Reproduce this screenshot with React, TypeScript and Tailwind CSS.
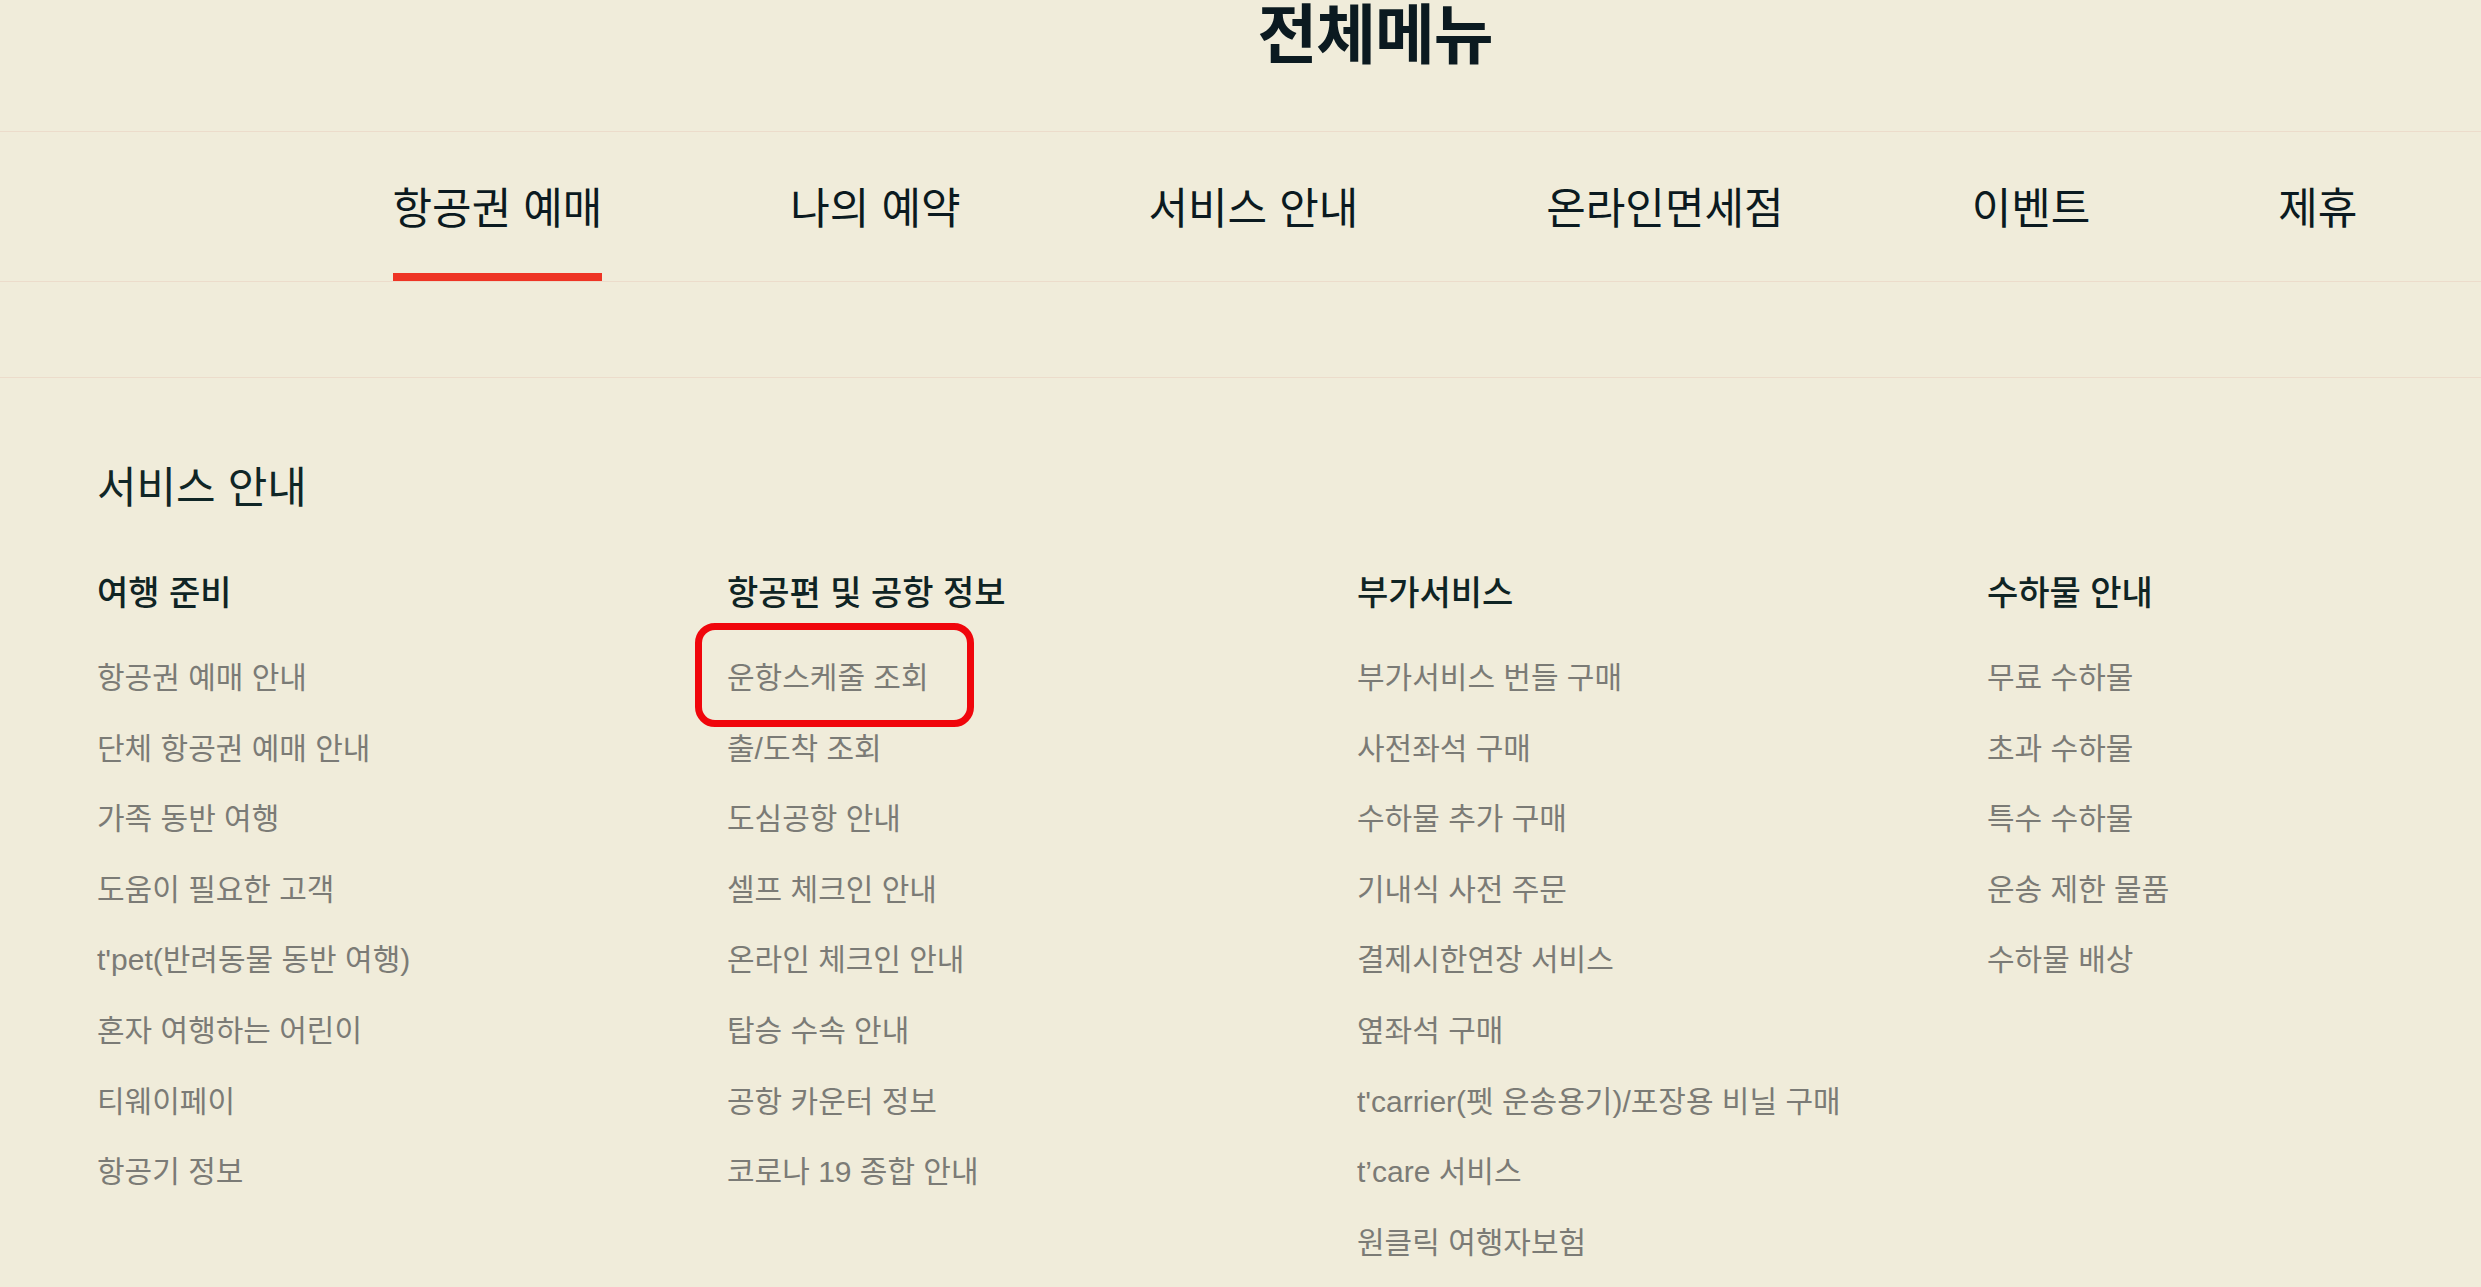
import React from "react";

const tabs = ["항공권 예매", "나의 예약", "서비스 안내", "온라인면세점", "이벤트", "제휴"];

const columns: { title: string; items: string[] }[] = [
  {
    title: "여행 준비",
    items: [
      "항공권 예매 안내",
      "단체 항공권 예매 안내",
      "가족 동반 여행",
      "도움이 필요한 고객",
      "t'pet(반려동물 동반 여행)",
      "혼자 여행하는 어린이",
      "티웨이페이",
      "항공기 정보",
    ],
  },
  {
    title: "항공편 및 공항 정보",
    items: [
      "운항스케줄 조회",
      "출/도착 조회",
      "도심공항 안내",
      "셀프 체크인 안내",
      "온라인 체크인 안내",
      "탑승 수속 안내",
      "공항 카운터 정보",
      "코로나 19 종합 안내",
    ],
  },
  {
    title: "부가서비스",
    items: [
      "부가서비스 번들 구매",
      "사전좌석 구매",
      "수하물 추가 구매",
      "기내식 사전 주문",
      "결제시한연장 서비스",
      "옆좌석 구매",
      "t'carrier(펫 운송용기)/포장용 비닐 구매",
      "t’care 서비스",
      "원클릭 여행자보험",
    ],
  },
  {
    title: "수하물 안내",
    items: ["무료 수하물", "초과 수하물", "특수 수하물", "운송 제한 물품", "수하물 배상"],
  },
];

export default function App() {
  return (
    <div
      className="w-[2481px] min-h-screen overflow-hidden bg-[#f0ecda]"
      style={{ fontFamily: '"Liberation Sans", "Noto Sans CJK KR", sans-serif' }}
    >
      <div className="w-[2750px]">
        {/* title */}
        <div className="h-[132px] border-b border-[#ecdccb] flex justify-center">
          <h1 className="text-[65px] leading-[72px] font-bold text-[#0b1a20] tracking-[-1px]">전체메뉴</h1>
        </div>
        {/* tabs */}
        <nav className="h-[150px] border-b border-[#ecdccb] flex justify-center gap-[188px]">
          {tabs.map((t, i) => (
            <div
              key={t}
              className={
                "h-full pt-[56px] border-b-[8px] text-[43px] leading-[43px] text-[#0b1a20] " +
                (i === 0 ? "border-[#ee3424]" : "border-transparent")
              }
            >
              {t}
            </div>
          ))}
        </nav>
      </div>
      <div className="h-[96px] border-b border-[#ecdccb]" />
      {/* content */}
      <div className="pl-[97px] pt-[88px]">
        <h2 className="text-[43px] leading-[44px] text-[#102626]">서비스 안내</h2>
        <div className="mt-[66px] flex">
          {columns.map((c, ci) => (
            <div key={c.title} className="w-[630px] shrink-0">
              <h3 className="text-[34px] leading-[34px] font-medium text-[#0f2424]">{c.title}</h3>
              <ul className="mt-[33px]">
                {c.items.map((it, ii) => (
                  <li key={it} className="relative text-[30px] leading-[70.6px] text-[#7b7b76]">
                    {ci === 1 && ii === 0 && (
                      <span className="absolute left-[-32px] top-[-20px] h-[104px] w-[279px] rounded-[20px] border-[7px] border-[#f0060c]" />
                    )}
                    {it}
                  </li>
                ))}
              </ul>
            </div>
          ))}
        </div>
      </div>
    </div>
  );
}
